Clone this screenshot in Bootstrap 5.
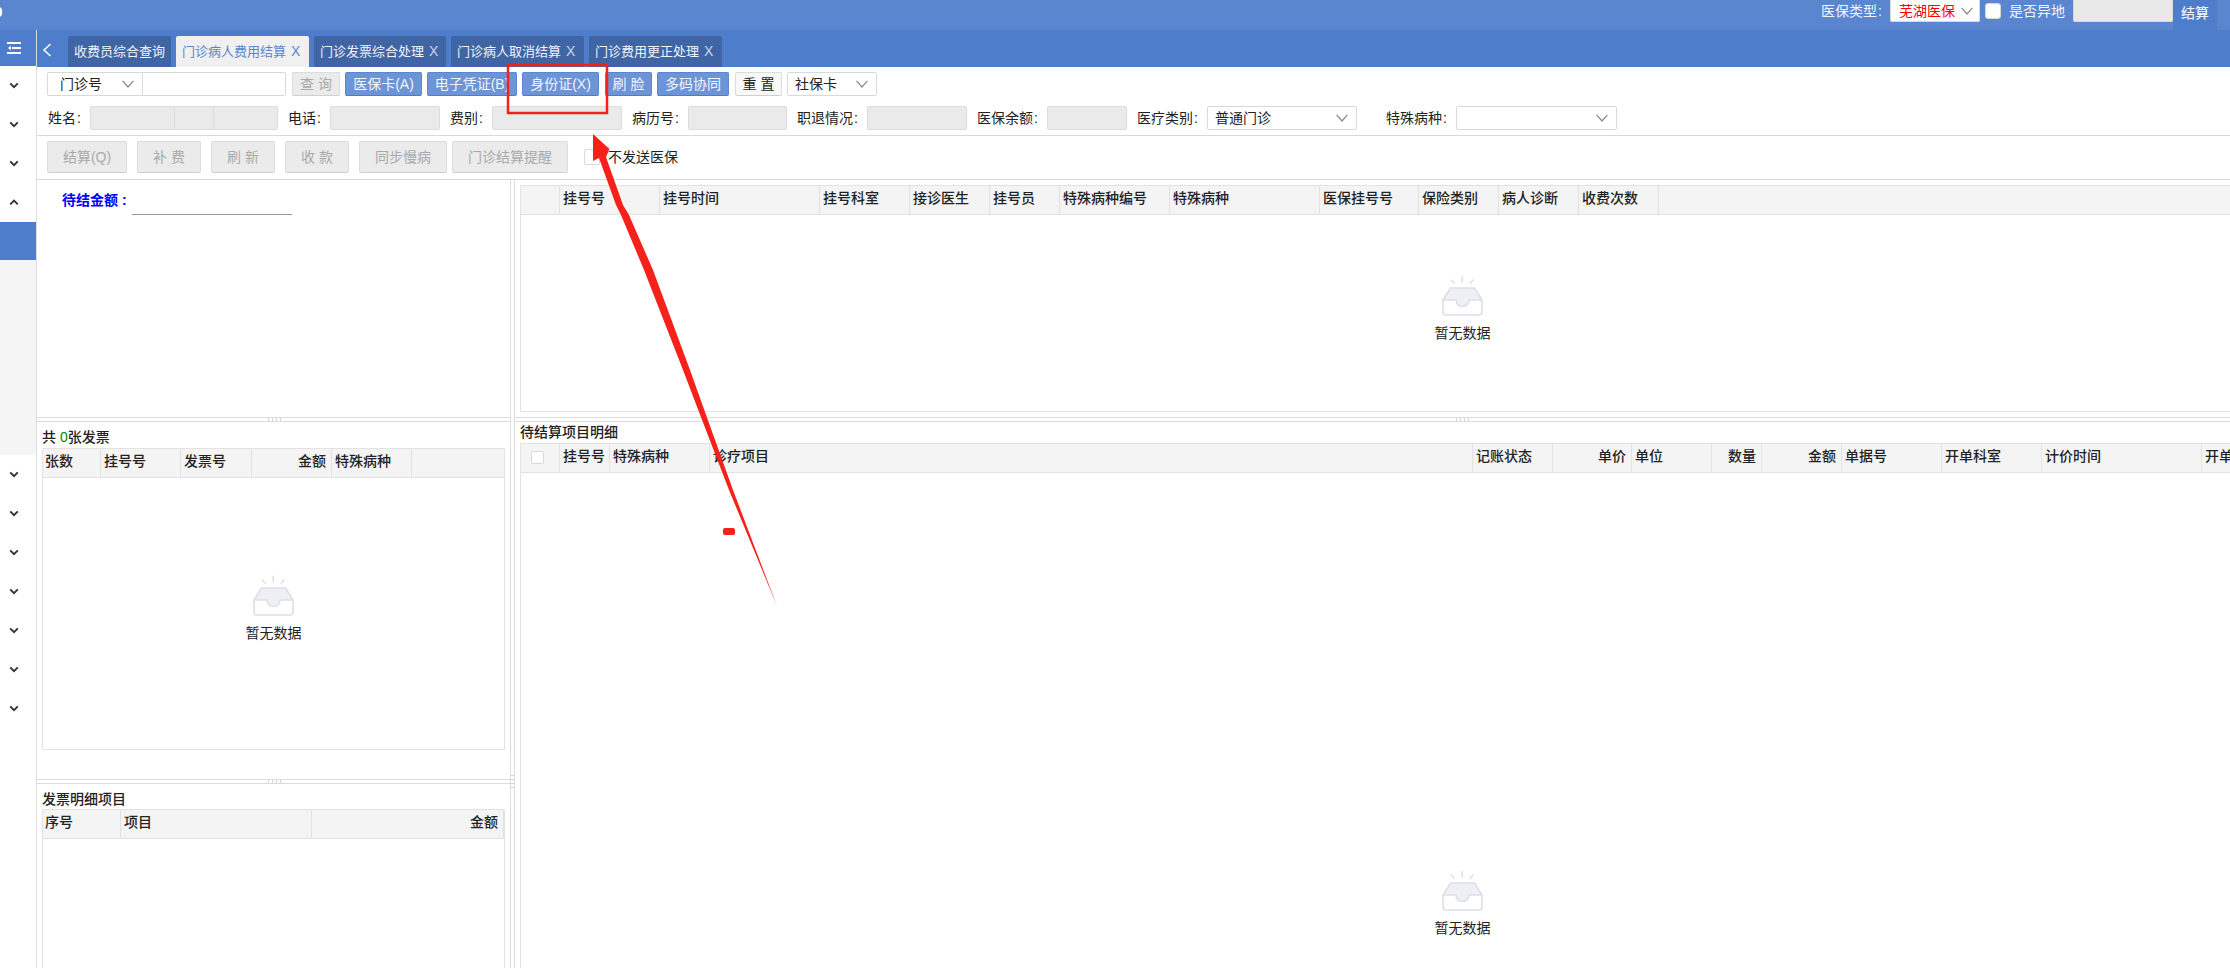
<!DOCTYPE html>
<html lang="zh">
<head>
<meta charset="utf-8">
<title>门诊病人费用结算</title>
<link href="https://cdn.jsdelivr.net/npm/bootstrap@5.3.0/dist/css/bootstrap.min.css" rel="stylesheet">
<style>
html,body{height:968px;overflow:hidden;}
body{font-family:"Liberation Sans","Noto Sans CJK SC",sans-serif;font-size:14px;color:#222;background:#fff;line-height:20px;}
.app{position:relative;width:2230px;height:968px;overflow:hidden;}
.topbar{height:30px;background:#5a85cf;color:#f2f5fb;padding-right:13px;}
.top-txt{padding-top:2px;line-height:18px;}
.cl{margin-left:1px;}
.top-sel{width:90px;height:22px;background:#fff;border:1px solid #d8d8d8;border-top:0;border-radius:0 0 2px 2px;color:#f00;padding:0 6px 0 8px;margin:0 5px 0 8px;}
.top-check{width:16px;height:16px;flex:none;background:#fff;border:1px solid #d5d5d5;border-radius:3px;margin-top:3px;}
.top-lab{margin:0 8px;}
.top-inp{width:100px;height:22px;background:#e9e9e9;border:1px solid #d8d8d8;border-top:0;border-radius:0 0 2px 2px;}
.top-tab{width:44px;height:30px;background:#4e7ecb;color:#fff;padding-top:3px;}
.side{width:37px;border-right:1px solid #dcdcdc;}
.side-head{height:36px;background:#4e7ecb;padding-right:8px;}
.side-item{height:39px;padding-right:8px;}
.side-active{height:38px;background:#4e7ecb;}
.side-sub{height:195px;background:#f5f5f5;}
.tabbar{height:37px;background:#4e7ecb;padding-top:6px;color:#fff;font-size:13px;}
.back-arrow{width:31px;padding-left:5px;padding-top:3px;}
.tab-item{height:31px;background:#4065a4;color:#f0f4fb;border-radius:2px 2px 0 0;line-height:31px;padding-left:6px;white-space:nowrap;margin-right:5px;}
.tab-x{font-size:14px;color:#c9d6ee;margin-left:5px;}
.tab-on{background:#f0f0f0;color:#5a85cf;}
.tab-on .tab-x{color:#5a85cf;}
.w103{width:103px}.w133{width:133px}.w132{width:132px}
.tool-a{padding:5px 0 5px 10px;border-bottom:1px solid #d9d9d9;}
.tool-b{padding:5px 0 6px 10px;border-bottom:1px solid #d9d9d9;}
.row-one{height:24px;margin-bottom:10px;}
.row-two{display:grid;grid-template-columns:43px 188px 52px 110px 52px 130px 66px 99px 80px 100px 80px 80px 80px 150px 99px 161px;height:24px;}
.lab{text-align:right;padding-right:9px;line-height:24px;white-space:nowrap;}
.fake-sel{height:24px;background:#fff;border:1px solid #d9d9d9;border-radius:2px;padding:0 8px 0 7px;line-height:22px;}
.sel-main{width:96px;border-radius:2px 0 0 2px;padding-left:12px;}
.inp-main{width:143px;height:24px;border:1px solid #d9d9d9;border-left:0;border-radius:0 2px 2px 0;background:#fff;}
.sel-card{width:90px;margin-left:5px;}
input.form-control.ro{height:24px;min-height:0;background:#eaeaea;border:1px solid #dcdcdc;border-radius:2px;padding:0;box-shadow:none;}
.n1{width:85px;border-radius:2px 0 0 2px!important;}
.n2{width:39px;border-radius:0!important;border-left:0!important;}
.n3{width:64px;border-radius:0 2px 2px 0!important;border-left:0!important;}
.btn.act{height:24px;padding:0;font-size:14px;line-height:22px;background:#6c94d6;border:1px solid #5b87cf;border-bottom-color:#4e7ecb;color:#f2f5fb;border-radius:2px;margin-left:5px;white-space:nowrap;}
.btn.off{height:24px;padding:0;font-size:14px;line-height:22px;background:#ebebeb;border:1px solid #dcdcdc;border-bottom-color:#cfcfcf;color:#aaa;border-radius:2px;opacity:1;white-space:nowrap;}
.btn.plain{height:24px;padding:0;font-size:14px;line-height:22px;background:#f8f8f8;border:1px solid #dcdcdc;border-bottom-color:#cfcfcf;color:#222;border-radius:2px;margin-left:6px;}
.b48{width:48px;margin-left:6px}.b77{width:77px}.b90{width:90px}.b47{width:47px}.b72{width:72px}
.btn.act.gap6{margin-left:6px;}
.tall{height:32px!important;line-height:30px!important;margin-right:10px;}
.tall.t80{width:80px}.tall.t64{width:64px}.tall.t88{width:88px;margin-right:5px}.tall.t116{width:116px;margin-right:16px}
.chk{width:16px;height:16px;flex:none;border:1px solid #d9d9d9;border-radius:2px;background:#fff;}
.chk-lab{margin-left:8px;}
.main-area{height:788px;overflow:hidden;}
.col-left{width:473px;}
.split-v{width:5px;border-left:1px solid #dcdcdc;border-right:1px solid #dcdcdc;position:relative;}
.grip-v{position:absolute;left:0;top:595px;width:3px;height:15px;background:repeating-linear-gradient(180deg,#d5d5d5 0 1px,#fff 1px 4px);}
.col-right{width:1715px;overflow:hidden;}
.pane-sum{height:238px;padding:10px 0 0 25px;}
.sum-lab{color:#00f;font-weight:700;width:70px;}
.sum-cl{margin-left:4px;}
.sum-line{width:160px;height:25px;border-bottom:1px solid #999;}
.split-h{height:5px;flex:none;border-top:1px solid #dcdcdc;border-bottom:1px solid #dcdcdc;display:flex;justify-content:center;padding-left:4px;}
.split-r{padding-left:182px;}
.grip-h{width:15px;background:repeating-linear-gradient(90deg,#d5d5d5 0 1px,#fff 1px 4px);}
.pane-inv{height:358px;padding:5px 5px 0 5px;}
.pane-det{height:185px;padding:5px 5px 0 5px;overflow:hidden;}
.pane-t1{height:237px;padding:5px 0 5px 5px;}
.pane-t2{padding:0 0 0 5px;height:546px;overflow:hidden;}
.ttl{height:21px;font-weight:500;line-height:20px;white-space:nowrap;}
.zero{color:#080;}
.dt{border:1px solid #e2e2e2;border-radius:1px;background:#fff;}
.dt-h{display:grid;height:29px;background:#f4f4f4;border-bottom:1px solid #e2e2e2;font-weight:500;}
.dt-h>div{border-right:1px solid #e2e2e2;padding-left:3px;line-height:24px;white-space:nowrap;overflow:hidden;min-width:0;}
.dt-h>div.te{text-align:right;padding-right:5px;padding-left:0;}
.dt-h>div.fill{border-right:0;}
.g-inv>div:first-child,.g-det>div:first-child{padding-left:2px;}
.g-inv{grid-template-columns:58px 80px 71px 80px 80px 1fr;}
.g-det{grid-template-columns:78px 191px 1fr;}
.g-t1{grid-template-columns:39px 100px 160px 90px 80px 70px 110px 150px 99px 80px 80px 80px 1fr;}
.g-t2{grid-template-columns:39px 50px 100px 763px 80px 79px 80px 50px 80px 100px 100px 160px 100px;width:1800px;}
.wide{margin-right:-3px;}
.ht-inv{height:302px;}
.ht-det{height:300px;}
.ht-t1{height:227px;}
.ht-t2{height:895px;overflow:hidden;}
.body-box{flex:1 1 auto;padding-bottom:8px;}
.body-inv{padding-bottom:10px;}
.body-shift{padding-left:172px;}
.body-box2{height:862px;padding-bottom:0;}
.hchk{width:13px;height:13px;background:#fff;border:1px solid #d9d9d9;border-radius:2px;margin:7px 0 0 7px;}
.empty-txt{margin-top:7px;line-height:20px;}
.mark-svg{position:absolute;left:0;top:0;width:2230px;height:968px;pointer-events:none;}
</style>
</head>
<body>
<svg width="0" height="0" class="d-block position-absolute">
  <symbol id="down" viewBox="0 0 10 7"><path d="M1.2 1.4 5 5.2 8.8 1.4" fill="none" stroke="#333" stroke-width="1.9"/></symbol>
  <symbol id="up" viewBox="0 0 10 7"><path d="M1.2 5.4 5 1.6 8.8 5.4" fill="none" stroke="#333" stroke-width="1.9"/></symbol>
  <symbol id="vee" viewBox="0 0 12 8"><path d="M.6 .8 6 7 11.4 .8" fill="none" stroke="#888" stroke-width="1.2"/></symbol>
  <symbol id="inbox" viewBox="0 0 41 41">
    <path d="M20.3 .7V7.5M9 4.5l3.7 4.2M31.5 4.5l-3.7 4.2" fill="none" stroke="#dfe2ea" stroke-width="1.6"/>
    <path d="M1 25V37a3 3 0 0 0 3 3H37a3 3 0 0 0 3-3V25" fill="#fff" stroke="#dcdfe8" stroke-width="1.6"/>
    <path d="M8.5 13H32.5L40 25H27a6.500 6.500 0 0 1-13 0H1Z" fill="#eef0f5" stroke="#dcdfe8" stroke-width="1.6"/>
  </symbol>
</svg>

<div class="app d-flex flex-column">
  <div class="topbar d-flex align-items-start flex-shrink-0">
    <svg width="3" height="30" class="flex-shrink-0"><path d="M0 7a9 6 0 0 1 2 5 9 6 0 0 1-2 5Z" fill="#fff"/></svg>
    <div class="ms-auto d-flex align-items-start">
      <span class="top-txt">医保类型<span class="cl">:</span></span>
      <div class="top-sel d-flex justify-content-between align-items-center"><span>芜湖医保</span><svg width="12" height="8"><use href="#vee"/></svg></div>
      <div class="top-check"></div>
      <span class="top-lab top-txt">是否异地</span>
      <div class="top-inp"></div>
      <div class="top-tab text-center">结算</div>
    </div>
  </div>

  <div class="d-flex flex-grow-1" style="min-height:0">
    <div class="side flex-shrink-0">
      <div class="side-head d-flex align-items-center justify-content-center">
        <svg width="14" height="12" viewBox="0 0 14 12"><path d="M0 1H14M5 6H14M0 11H14" stroke="#fff" stroke-width="2" fill="none"/><path d="M4 3.800 1 6l3 2.200Z" fill="#fff"/></svg>
      </div>
      <div class="side-item d-flex align-items-center justify-content-center"><svg width="10" height="7"><use href="#down"/></svg></div>
      <div class="side-item d-flex align-items-center justify-content-center"><svg width="10" height="7"><use href="#down"/></svg></div>
      <div class="side-item d-flex align-items-center justify-content-center"><svg width="10" height="7"><use href="#down"/></svg></div>
      <div class="side-item d-flex align-items-center justify-content-center"><svg width="10" height="7"><use href="#up"/></svg></div>
      <div class="side-active"></div>
      <div class="side-sub"></div>
      <div class="side-item d-flex align-items-center justify-content-center"><svg width="10" height="7"><use href="#down"/></svg></div>
      <div class="side-item d-flex align-items-center justify-content-center"><svg width="10" height="7"><use href="#down"/></svg></div>
      <div class="side-item d-flex align-items-center justify-content-center"><svg width="10" height="7"><use href="#down"/></svg></div>
      <div class="side-item d-flex align-items-center justify-content-center"><svg width="10" height="7"><use href="#down"/></svg></div>
      <div class="side-item d-flex align-items-center justify-content-center"><svg width="10" height="7"><use href="#down"/></svg></div>
      <div class="side-item d-flex align-items-center justify-content-center"><svg width="10" height="7"><use href="#down"/></svg></div>
      <div class="side-item d-flex align-items-center justify-content-center"><svg width="10" height="7"><use href="#down"/></svg></div>
    </div>

    <div class="flex-grow-1 d-flex flex-column" style="min-width:0">
      <div class="tabbar d-flex flex-shrink-0">
        <div class="back-arrow"><svg width="10" height="14" viewBox="0 0 10 14"><path d="M8.500 1 2 7l6.500 6" fill="none" stroke="#fff" stroke-width="1.500"/></svg></div>
        <div class="tab-item w103">收费员综合查询</div>
        <div class="tab-item w133 tab-on">门诊病人费用结算<span class="tab-x">X</span></div>
        <div class="tab-item w132">门诊发票综合处理<span class="tab-x">X</span></div>
        <div class="tab-item w133">门诊病人取消结算<span class="tab-x">X</span></div>
        <div class="tab-item w133">门诊费用更正处理<span class="tab-x">X</span></div>
      </div>

      <div class="tool-a flex-shrink-0">
        <div class="d-flex row-one">
          <div class="fake-sel sel-main d-flex justify-content-between align-items-center"><span>门诊号</span><svg width="12" height="8"><use href="#vee"/></svg></div>
          <input class="inp-main" type="text" aria-label="门诊号">
          <button class="btn off b48" type="button" disabled>查 询</button>
          <button class="btn act b77" type="button">医保卡(A)</button>
          <button class="btn act b90" type="button">电子凭证(B)</button>
          <button class="btn act b77" type="button">身份证(X)</button>
          <button class="btn act b47 gap6" type="button">刷 脸</button>
          <button class="btn act b72" type="button">多码协同</button>
          <button class="btn plain b47" type="button">重 置</button>
          <div class="fake-sel sel-card d-flex justify-content-between align-items-center"><span>社保卡</span><svg width="12" height="8"><use href="#vee"/></svg></div>
        </div>
        <div class="row-two">
          <div class="lab">姓名<span class="cl">:</span></div>
          <div class="d-flex"><input class="form-control ro n1" disabled aria-label="姓名"><input class="form-control ro n2" disabled aria-label="性别"><input class="form-control ro n3" disabled aria-label="年龄"></div>
          <div class="lab">电话<span class="cl">:</span></div><input class="form-control ro" disabled aria-label="电话">
          <div class="lab">费别<span class="cl">:</span></div><input class="form-control ro" disabled aria-label="费别">
          <div class="lab">病历号<span class="cl">:</span></div><input class="form-control ro" disabled aria-label="病历号">
          <div class="lab">职退情况<span class="cl">:</span></div><input class="form-control ro" disabled aria-label="职退情况">
          <div class="lab">医保余额<span class="cl">:</span></div><input class="form-control ro" disabled aria-label="医保余额">
          <div class="lab">医疗类别<span class="cl">:</span></div>
          <div class="fake-sel d-flex justify-content-between align-items-center"><span>普通门诊</span><svg width="12" height="8"><use href="#vee"/></svg></div>
          <div class="lab">特殊病种<span class="cl">:</span></div>
          <div class="fake-sel d-flex justify-content-end align-items-center"><svg width="12" height="8"><use href="#vee"/></svg></div>
        </div>
      </div>

      <div class="tool-b flex-shrink-0 d-flex align-items-center">
        <button class="btn off tall t80" type="button" disabled>结算(Q)</button>
        <button class="btn off tall t64" type="button" disabled>补 费</button>
        <button class="btn off tall t64" type="button" disabled>刷 新</button>
        <button class="btn off tall t64" type="button" disabled>收 款</button>
        <button class="btn off tall t88" type="button" disabled>同步慢病</button>
        <button class="btn off tall t116" type="button" disabled>门诊结算提醒</button>
        <div class="chk"></div>
        <span class="chk-lab">不发送医保</span>
      </div>

      <div class="main-area d-flex">
        <div class="col-left d-flex flex-column">
          <div class="pane-sum d-flex align-items-start">
            <span class="sum-lab">待结金额<span class="sum-cl">:</span></span>
            <div class="sum-line"></div>
          </div>
          <div class="split-h"><div class="grip-h"></div></div>
          <div class="pane-inv d-flex flex-column">
            <div class="ttl">共 <span class="zero">0</span>张发票</div>
            <div class="dt ht-inv d-flex flex-column">
              <div class="dt-h g-inv flex-shrink-0">
                <div>张数</div><div>挂号号</div><div>发票号</div><div class="te">金额</div><div>特殊病种</div><div class="fill"></div>
              </div>
              <div class="flex-grow-1 d-flex flex-column align-items-center justify-content-center body-box body-inv">
                <svg width="41" height="41"><use href="#inbox"/></svg>
                <div class="empty-txt">暂无数据</div>
              </div>
            </div>
          </div>
          <div class="split-h"><div class="grip-h"></div></div>
          <div class="pane-det d-flex flex-column">
            <div class="ttl">发票明细项目</div>
            <div class="dt ht-det flex-shrink-0">
              <div class="dt-h g-det">
                <div>序号</div><div>项目</div><div class="te">金额</div>
              </div>
            </div>
          </div>
        </div>

        <div class="split-v flex-shrink-0"><div class="grip-v"></div></div>

        <div class="col-right d-flex flex-column">
          <div class="pane-t1 d-flex flex-column flex-shrink-0">
            <div class="dt ht-t1 wide d-flex flex-column">
              <div class="dt-h g-t1 flex-shrink-0">
                <div></div><div>挂号号</div><div>挂号时间</div><div>挂号科室</div><div>接诊医生</div><div>挂号员</div><div>特殊病种编号</div><div>特殊病种</div><div>医保挂号号</div><div>保险类别</div><div>病人诊断</div><div>收费次数</div><div class="fill"></div>
              </div>
              <div class="flex-grow-1 d-flex flex-column align-items-center justify-content-center body-box body-shift">
                <svg width="41" height="41"><use href="#inbox"/></svg>
                <div class="empty-txt">暂无数据</div>
              </div>
            </div>
          </div>
          <div class="split-h split-r"><div class="grip-h"></div></div>
          <div class="pane-t2 flex-shrink-0">
            <div class="ttl">待结算项目明细</div>
            <div class="dt ht-t2 wide">
              <div class="dt-h g-t2">
                <div><div class="hchk"></div></div><div>挂号号</div><div>特殊病种</div><div>诊疗项目</div><div>记账状态</div><div class="te">单价</div><div>单位</div><div class="te">数量</div><div class="te">金额</div><div>单据号</div><div>开单科室</div><div>计价时间</div><div>开单科室</div>
              </div>
              <div class="d-flex flex-column align-items-center justify-content-center body-box body-box2 body-shift">
                <svg width="41" height="41"><use href="#inbox"/></svg>
                <div class="empty-txt">暂无数据</div>
              </div>
            </div>
          </div>
        </div>
      </div>
    </div>
  </div>

  <svg class="mark-svg" viewBox="0 0 2230 968">
    <rect x="508" y="65" width="99" height="48" fill="none" stroke="#f5211a" stroke-width="2.5"/>
    <path d="M593 134 609.500 149 606 157 623 205 629 215 653 270 690 370 705 412 733 490 777 606 729 490 699 412 683 370 644 270 621 215 616 205 599 158 593 161Z" fill="#f5211a"/>
    <rect x="723" y="528" width="12" height="7" rx="2" fill="#f5211a"/>
  </svg>
</div>
<script src="https://cdn.jsdelivr.net/npm/bootstrap@5.3.0/dist/js/bootstrap.bundle.min.js"></script>
</body>
</html>
